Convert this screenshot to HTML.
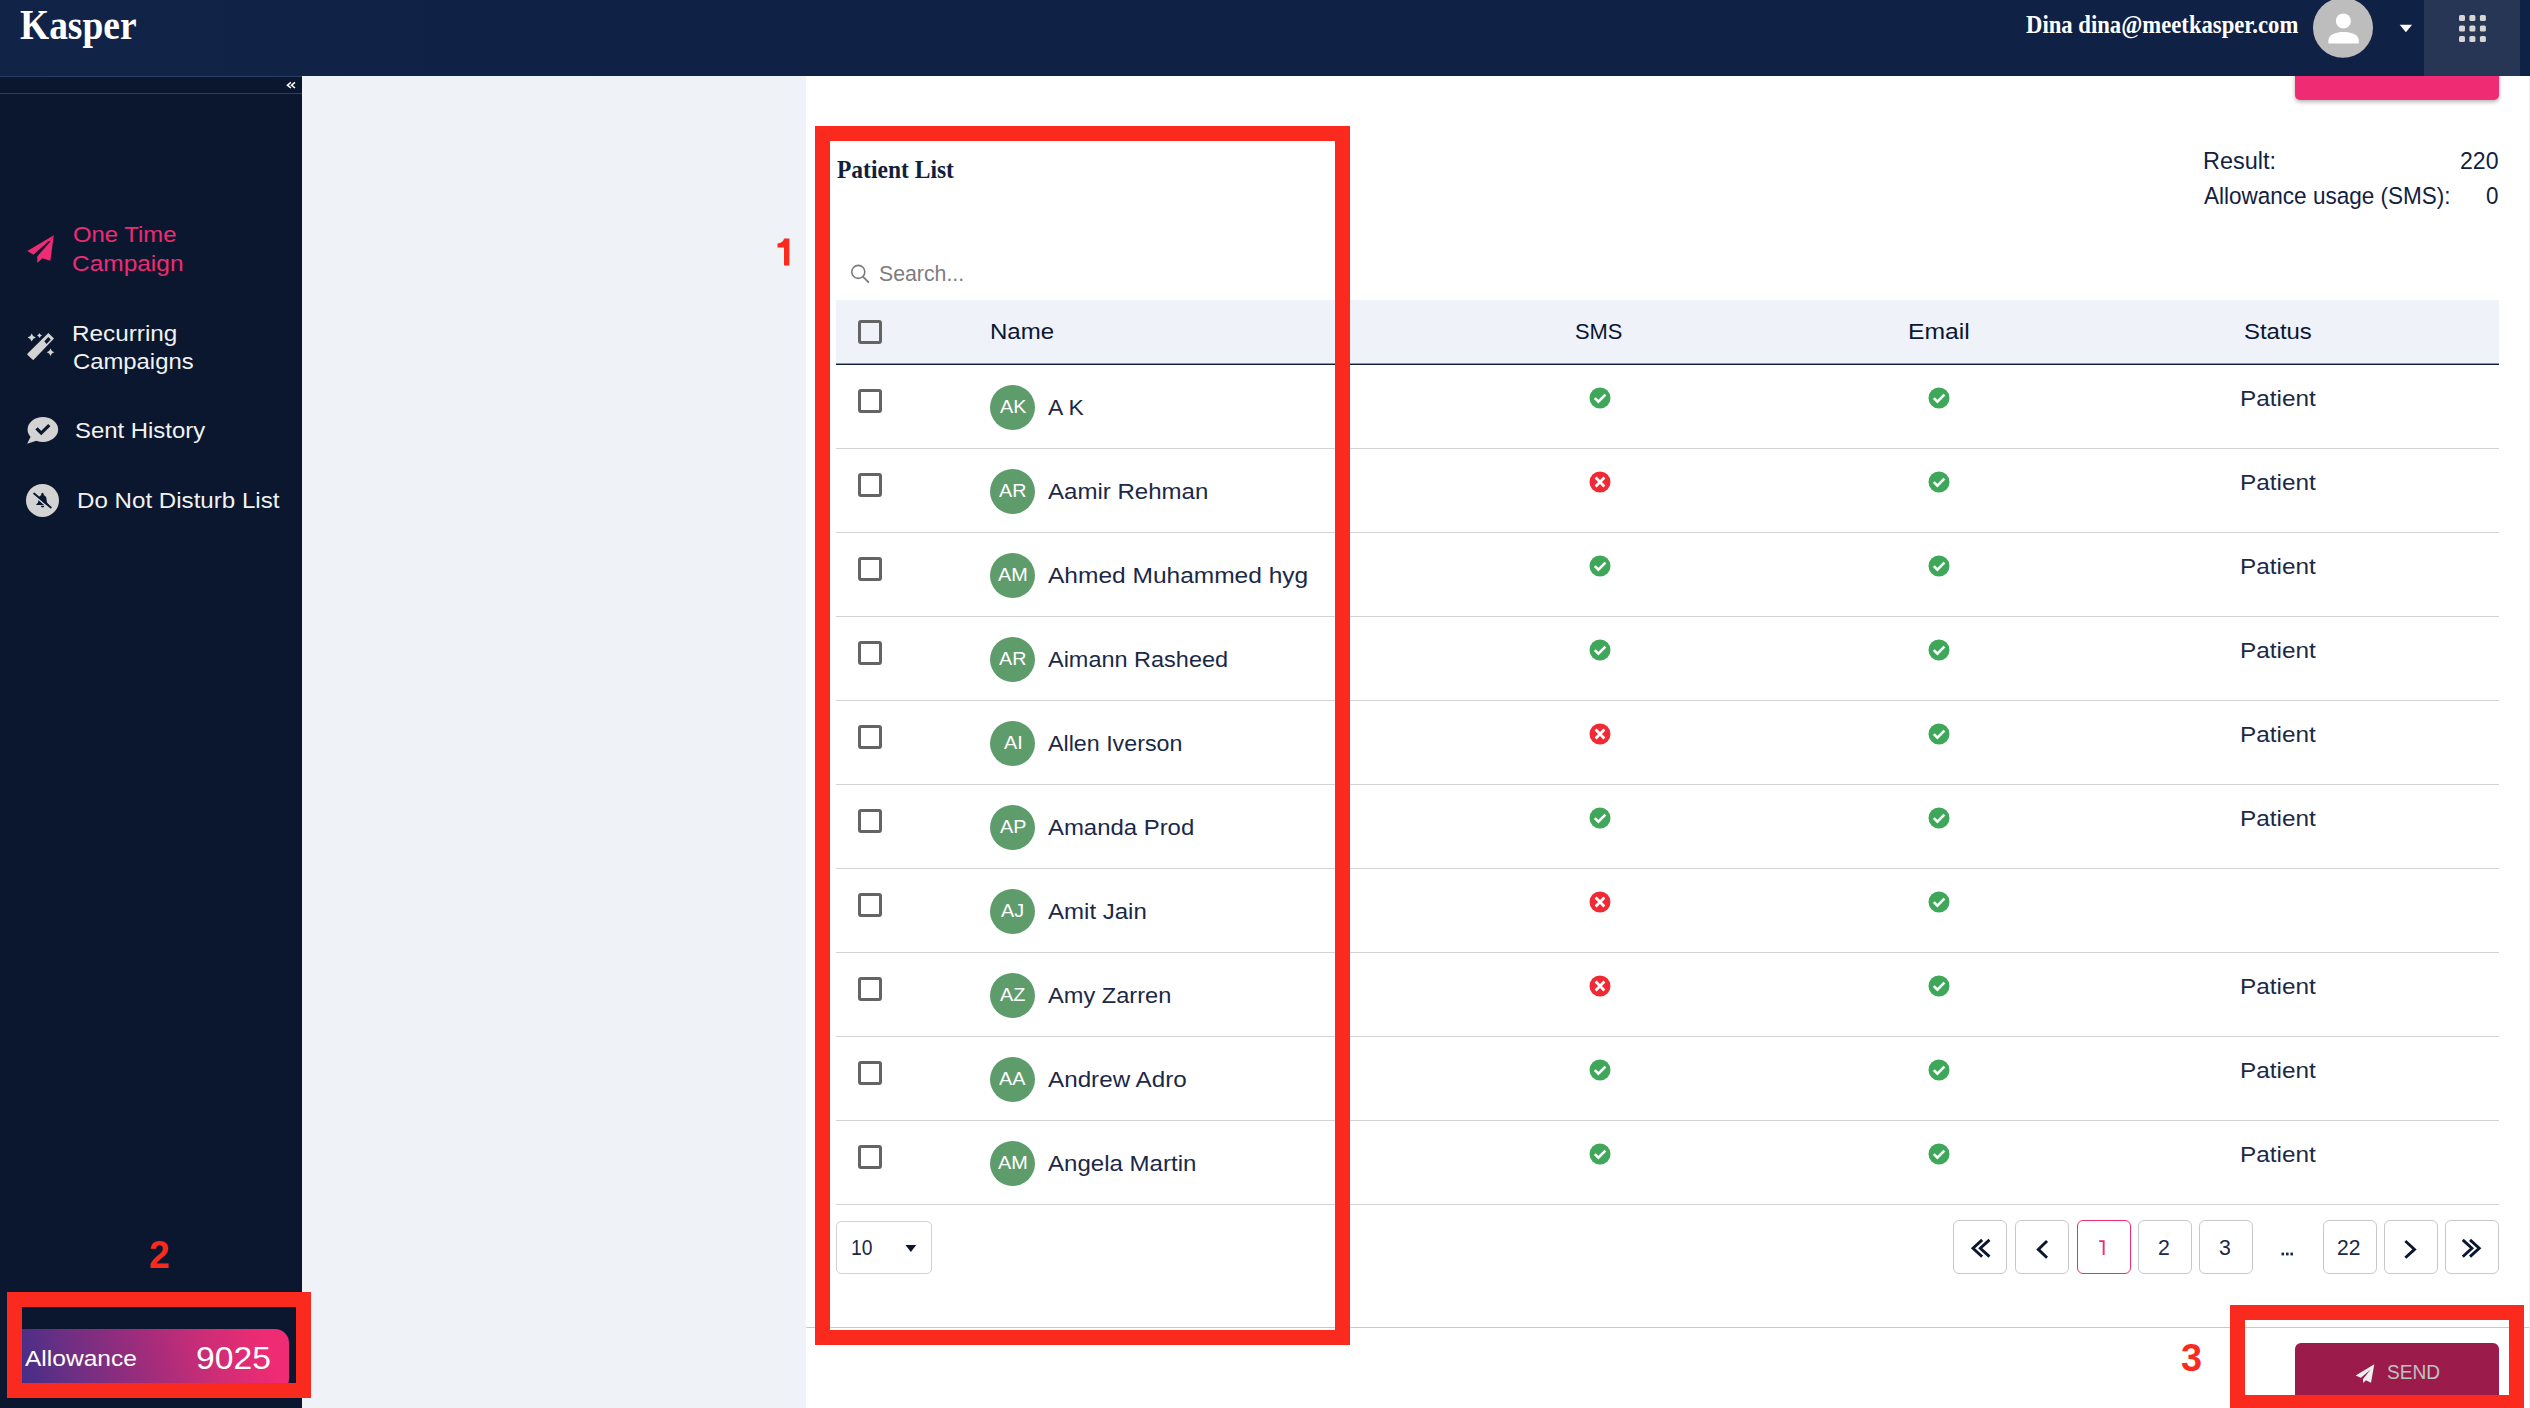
<!DOCTYPE html>
<html><head><meta charset="utf-8"><style>
html,body{margin:0;padding:0;}
body{width:2530px;height:1408px;overflow:hidden;position:relative;background:#fff;}
.abs{position:absolute;}
.t{position:absolute;white-space:nowrap;transform-origin:0 0;}
.cb{position:absolute;width:18px;height:18px;border:3px solid #646464;border-radius:3px;box-sizing:content-box;}
.av{position:absolute;width:45px;height:45px;border-radius:50%;background:#5f9c6c;}
.ini{font-family:"Liberation Sans",sans-serif;font-size:17px;color:#fff;}
.pg{position:absolute;top:1220px;width:54px;height:54px;box-sizing:border-box;border:1px solid #c9c9c9;border-radius:6px;}
</style></head><body>
<!-- sidebar -->
<div class="abs" style="left:0;top:76px;width:302px;height:1332px;background:#0a172f"></div>
<div class="abs" style="left:0;top:76px;width:302px;height:1px;background:#2a3d63"></div>
<div class="abs" style="left:0;top:93px;width:302px;height:1px;background:#2a3d63"></div>
<svg class="abs" style="left:284px;top:79px" width="14" height="12" viewBox="0 0 14 12">
  <path d="M6.9 3.4 L3.4 6.2 L6.9 9 M11 3.4 L7.5 6.2 L11 9" stroke="#fff" stroke-width="1.5" fill="none"/>
</svg>
<svg class="abs" style="left:20px;top:225px" width="45" height="45" viewBox="0 0 45 45">
  <path d="M33.8 10.2 L7.3 26 L13.4 29.8 L28.9 16.1 L30.4 16.6 Z" fill="#ef2b73"/>
  <path d="M33.8 10.2 L30.4 35.8 L22.4 33.2 L17.4 37.9 L17.2 31.4 L30 16.9 Z" fill="#ef2b73"/>
</svg>
<svg class="abs" style="left:20px;top:325px" width="45" height="45" viewBox="0 0 45 45">
  <path d="M28.4 8 L34 13.4 L13.9 34.6 Q13.3 35.2 12.5 34.6 L7.6 29.9 Q7 29.2 7.6 28.6 Z M28.3 12 L24.3 16.3 L26.5 18.9 L30.8 14.5 Z" fill="#d3d3d3" fill-rule="evenodd"/>
  <path d="M11.7 8.4 Q12.601999999999999 11.598 15.799999999999999 12.5 Q12.601999999999999 13.402 11.7 16.6 Q10.798 13.402 7.6 12.5 Q10.798 11.598 11.7 8.4Z" fill="#d3d3d3"/>
  <path d="M19.5 8.0 Q20.05 9.95 22.0 10.5 Q20.05 11.05 19.5 13.0 Q18.95 11.05 17.0 10.5 Q18.95 9.95 19.5 8.0Z" fill="#d3d3d3"/>
  <path d="M30.5 23.5 Q31.336 26.464000000000002 34.3 27.3 Q31.336 28.136 30.5 31.1 Q29.664 28.136 26.7 27.3 Q29.664 26.464000000000002 30.5 23.5Z" fill="#d3d3d3"/>
</svg>
<svg class="abs" style="left:20px;top:410px" width="45" height="45" viewBox="0 0 45 45">
  <ellipse cx="22.85" cy="19.5" rx="15.3" ry="12.5" fill="#d3d3d3"/>
  <path d="M7.2 33.7 L10.7 26.5 L17 30.5 Z" fill="#d3d3d3"/>
  <path d="M16.5 18.4 L21.2 23.1 L29.3 15.1" stroke="#0a172f" stroke-width="3.2" fill="none"/>
</svg>
<svg class="abs" style="left:20px;top:478px" width="45" height="45" viewBox="0 0 45 45">
  <circle cx="22.5" cy="22.4" r="16.5" fill="#d3d3d3"/>
  <ellipse cx="22.5" cy="16.3" rx="1.2" ry="1.5" fill="#0b1630"/>
  <path d="M15.9 26.9 C17.6 25.6 18.5 24.2 18.5 21.6 C18.5 18.6 20.2 17 22.5 17 C24.8 17 26.6 18.6 26.6 21.6 C26.6 24.2 27.4 25.6 29.1 26.9 Z" fill="#0b1630"/>
  <path d="M20.8 27.7 A1.75 1.75 0 0 0 24.3 27.7 Z" fill="#0b1630"/>
  <path d="M13.2 16.6 L29.6 30.6" stroke="#d3d3d3" stroke-width="1.7"/>
  <path d="M14.1 15.6 L30.8 29.4" stroke="#0b1630" stroke-width="1.9" stroke-linecap="round"/>
</svg>
<!-- allowance -->
<div class="abs" style="left:10px;top:1329px;width:279px;height:64px;border-radius:0 14px 14px 0;background:linear-gradient(75deg,#3b2d88 0%,#6a2f84 22%,#9c2c7c 47%,#cf2d76 72%,#ef2b73 92%)"></div>
<!-- gray panel -->
<div class="abs" style="left:302px;top:76px;width:504px;height:1332px;background:#eff2f7"></div>
<!-- top pink button -->
<div class="abs" style="left:2295px;top:50px;width:204px;height:50px;background:#ef2b73;border-radius:5px;box-shadow:0 2px 4px rgba(0,0,0,0.3)"></div>
<!-- header -->
<div class="abs" style="left:0;top:0;width:2530px;height:76px;background:linear-gradient(90deg,#112448 0%,#0f2144 25%,#0f2144 100%)"></div>
<div class="abs" style="left:2424px;top:0;width:96px;height:76px;background:#273654"></div>
<svg class="abs" style="left:2300px;top:0" width="130" height="76" viewBox="0 0 130 76">
  <circle cx="43" cy="27.8" r="30" fill="#bdbdbd"/>
  <circle cx="43.4" cy="20.9" r="7.5" fill="#fff"/>
  <path d="M28.4 43.6 L28.4 40.5 C28.4 34.5 36 31.9 43.6 31.9 C51.2 31.9 58.8 34.5 58.8 40.5 L58.8 43.6 Z" fill="#fff"/>
  <path d="M99.7 24.8 L112.1 24.8 L105.9 32.3 Z" fill="#fff"/>
</svg>
<svg class="abs" style="left:2459px;top:15px" width="28" height="28" viewBox="0 0 28 28">
  <g fill="#d6d6d6">
  <rect x="0" y="0" width="6" height="6" rx="1.5"/><rect x="10.4" y="0" width="6" height="6" rx="1.5"/><rect x="20.9" y="0" width="6" height="6" rx="1.5"/>
  <rect x="0" y="10.5" width="6" height="6" rx="1.5"/><rect x="10.4" y="10.5" width="6" height="6" rx="1.5"/><rect x="20.9" y="10.5" width="6" height="6" rx="1.5"/>
  <rect x="0" y="21" width="6" height="6" rx="1.5"/><rect x="10.4" y="21" width="6" height="6" rx="1.5"/><rect x="20.9" y="21" width="6" height="6" rx="1.5"/>
  </g>
</svg>
<!-- search icon -->
<svg class="abs" style="left:848px;top:263px" width="24" height="24" viewBox="0 0 24 24">
  <circle cx="10.3" cy="8.9" r="6.5" stroke="#7a7a7a" stroke-width="1.6" fill="none"/>
  <path d="M14.9 13.6 L20.4 19.1" stroke="#7a7a7a" stroke-width="1.8" stroke-linecap="round"/>
</svg>
<!-- table header -->
<div class="abs" style="left:836px;top:300px;width:1663px;height:64px;background:#eff2f8"></div>
<div class="abs" style="left:836px;top:363px;width:1663px;height:1px;background:#8a93a6"></div><div class="abs" style="left:836px;top:364px;width:1663px;height:1px;background:#0f1f3d"></div>
<div class="cb" style="left:858px;top:320px"></div>
<div class='abs' style='left:836px;top:448px;width:1663px;height:1px;background:#d3d3d3'></div>
<div class='cb' style='left:858px;top:389px'></div>
<div class='av' style='left:990px;top:385px'></div>
<svg class='abs' style='left:1588.5px;top:387.4px' width='22' height='22' viewBox='0 0 22 22'><circle cx='11' cy='11' r='10.5' fill='#3fa75a'/><path d='M5.8 11.1 L9.4 14.7 L16.4 7.7' stroke='#fff' stroke-width='2.6' fill='none'/></svg>
<svg class='abs' style='left:1928px;top:387.4px' width='22' height='22' viewBox='0 0 22 22'><circle cx='11' cy='11' r='10.5' fill='#3fa75a'/><path d='M5.8 11.1 L9.4 14.7 L16.4 7.7' stroke='#fff' stroke-width='2.6' fill='none'/></svg>
<div class='abs' style='left:836px;top:532px;width:1663px;height:1px;background:#d3d3d3'></div>
<div class='cb' style='left:858px;top:473px'></div>
<div class='av' style='left:990px;top:469px'></div>
<svg class='abs' style='left:1588.5px;top:471.4px' width='22' height='22' viewBox='0 0 22 22'><circle cx='11' cy='11' r='10.5' fill='#ef2a34'/><path d='M6.6 6.6 L15.4 15.4 M15.4 6.6 L6.6 15.4' stroke='#fff' stroke-width='2.8' fill='none'/></svg>
<svg class='abs' style='left:1928px;top:471.4px' width='22' height='22' viewBox='0 0 22 22'><circle cx='11' cy='11' r='10.5' fill='#3fa75a'/><path d='M5.8 11.1 L9.4 14.7 L16.4 7.7' stroke='#fff' stroke-width='2.6' fill='none'/></svg>
<div class='abs' style='left:836px;top:616px;width:1663px;height:1px;background:#d3d3d3'></div>
<div class='cb' style='left:858px;top:557px'></div>
<div class='av' style='left:990px;top:553px'></div>
<svg class='abs' style='left:1588.5px;top:555.4px' width='22' height='22' viewBox='0 0 22 22'><circle cx='11' cy='11' r='10.5' fill='#3fa75a'/><path d='M5.8 11.1 L9.4 14.7 L16.4 7.7' stroke='#fff' stroke-width='2.6' fill='none'/></svg>
<svg class='abs' style='left:1928px;top:555.4px' width='22' height='22' viewBox='0 0 22 22'><circle cx='11' cy='11' r='10.5' fill='#3fa75a'/><path d='M5.8 11.1 L9.4 14.7 L16.4 7.7' stroke='#fff' stroke-width='2.6' fill='none'/></svg>
<div class='abs' style='left:836px;top:700px;width:1663px;height:1px;background:#d3d3d3'></div>
<div class='cb' style='left:858px;top:641px'></div>
<div class='av' style='left:990px;top:637px'></div>
<svg class='abs' style='left:1588.5px;top:639.4px' width='22' height='22' viewBox='0 0 22 22'><circle cx='11' cy='11' r='10.5' fill='#3fa75a'/><path d='M5.8 11.1 L9.4 14.7 L16.4 7.7' stroke='#fff' stroke-width='2.6' fill='none'/></svg>
<svg class='abs' style='left:1928px;top:639.4px' width='22' height='22' viewBox='0 0 22 22'><circle cx='11' cy='11' r='10.5' fill='#3fa75a'/><path d='M5.8 11.1 L9.4 14.7 L16.4 7.7' stroke='#fff' stroke-width='2.6' fill='none'/></svg>
<div class='abs' style='left:836px;top:784px;width:1663px;height:1px;background:#d3d3d3'></div>
<div class='cb' style='left:858px;top:725px'></div>
<div class='av' style='left:990px;top:721px'></div>
<svg class='abs' style='left:1588.5px;top:723.4px' width='22' height='22' viewBox='0 0 22 22'><circle cx='11' cy='11' r='10.5' fill='#ef2a34'/><path d='M6.6 6.6 L15.4 15.4 M15.4 6.6 L6.6 15.4' stroke='#fff' stroke-width='2.8' fill='none'/></svg>
<svg class='abs' style='left:1928px;top:723.4px' width='22' height='22' viewBox='0 0 22 22'><circle cx='11' cy='11' r='10.5' fill='#3fa75a'/><path d='M5.8 11.1 L9.4 14.7 L16.4 7.7' stroke='#fff' stroke-width='2.6' fill='none'/></svg>
<div class='abs' style='left:836px;top:868px;width:1663px;height:1px;background:#d3d3d3'></div>
<div class='cb' style='left:858px;top:809px'></div>
<div class='av' style='left:990px;top:805px'></div>
<svg class='abs' style='left:1588.5px;top:807.4px' width='22' height='22' viewBox='0 0 22 22'><circle cx='11' cy='11' r='10.5' fill='#3fa75a'/><path d='M5.8 11.1 L9.4 14.7 L16.4 7.7' stroke='#fff' stroke-width='2.6' fill='none'/></svg>
<svg class='abs' style='left:1928px;top:807.4px' width='22' height='22' viewBox='0 0 22 22'><circle cx='11' cy='11' r='10.5' fill='#3fa75a'/><path d='M5.8 11.1 L9.4 14.7 L16.4 7.7' stroke='#fff' stroke-width='2.6' fill='none'/></svg>
<div class='abs' style='left:836px;top:952px;width:1663px;height:1px;background:#d3d3d3'></div>
<div class='cb' style='left:858px;top:893px'></div>
<div class='av' style='left:990px;top:889px'></div>
<svg class='abs' style='left:1588.5px;top:891.4px' width='22' height='22' viewBox='0 0 22 22'><circle cx='11' cy='11' r='10.5' fill='#ef2a34'/><path d='M6.6 6.6 L15.4 15.4 M15.4 6.6 L6.6 15.4' stroke='#fff' stroke-width='2.8' fill='none'/></svg>
<svg class='abs' style='left:1928px;top:891.4px' width='22' height='22' viewBox='0 0 22 22'><circle cx='11' cy='11' r='10.5' fill='#3fa75a'/><path d='M5.8 11.1 L9.4 14.7 L16.4 7.7' stroke='#fff' stroke-width='2.6' fill='none'/></svg>
<div class='abs' style='left:836px;top:1036px;width:1663px;height:1px;background:#d3d3d3'></div>
<div class='cb' style='left:858px;top:977px'></div>
<div class='av' style='left:990px;top:973px'></div>
<svg class='abs' style='left:1588.5px;top:975.4px' width='22' height='22' viewBox='0 0 22 22'><circle cx='11' cy='11' r='10.5' fill='#ef2a34'/><path d='M6.6 6.6 L15.4 15.4 M15.4 6.6 L6.6 15.4' stroke='#fff' stroke-width='2.8' fill='none'/></svg>
<svg class='abs' style='left:1928px;top:975.4px' width='22' height='22' viewBox='0 0 22 22'><circle cx='11' cy='11' r='10.5' fill='#3fa75a'/><path d='M5.8 11.1 L9.4 14.7 L16.4 7.7' stroke='#fff' stroke-width='2.6' fill='none'/></svg>
<div class='abs' style='left:836px;top:1120px;width:1663px;height:1px;background:#d3d3d3'></div>
<div class='cb' style='left:858px;top:1061px'></div>
<div class='av' style='left:990px;top:1057px'></div>
<svg class='abs' style='left:1588.5px;top:1059.4px' width='22' height='22' viewBox='0 0 22 22'><circle cx='11' cy='11' r='10.5' fill='#3fa75a'/><path d='M5.8 11.1 L9.4 14.7 L16.4 7.7' stroke='#fff' stroke-width='2.6' fill='none'/></svg>
<svg class='abs' style='left:1928px;top:1059.4px' width='22' height='22' viewBox='0 0 22 22'><circle cx='11' cy='11' r='10.5' fill='#3fa75a'/><path d='M5.8 11.1 L9.4 14.7 L16.4 7.7' stroke='#fff' stroke-width='2.6' fill='none'/></svg>
<div class='abs' style='left:836px;top:1204px;width:1663px;height:1px;background:#d3d3d3'></div>
<div class='cb' style='left:858px;top:1145px'></div>
<div class='av' style='left:990px;top:1141px'></div>
<svg class='abs' style='left:1588.5px;top:1143.4px' width='22' height='22' viewBox='0 0 22 22'><circle cx='11' cy='11' r='10.5' fill='#3fa75a'/><path d='M5.8 11.1 L9.4 14.7 L16.4 7.7' stroke='#fff' stroke-width='2.6' fill='none'/></svg>
<svg class='abs' style='left:1928px;top:1143.4px' width='22' height='22' viewBox='0 0 22 22'><circle cx='11' cy='11' r='10.5' fill='#3fa75a'/><path d='M5.8 11.1 L9.4 14.7 L16.4 7.7' stroke='#fff' stroke-width='2.6' fill='none'/></svg>
<!-- pagination -->
<div class='pg' style='left:1953.3px;border-color:#c9c9c9'></div>
<div class='pg' style='left:2015.4px;border-color:#c9c9c9'></div>
<div class='pg' style='left:2076.6px;border-color:#ef2b73'></div>
<div class='pg' style='left:2138.3px;border-color:#c9c9c9'></div>
<div class='pg' style='left:2199.3px;border-color:#c9c9c9'></div>
<div class='pg' style='left:2322.5px;border-color:#c9c9c9'></div>
<div class='pg' style='left:2384.3px;border-color:#c9c9c9'></div>
<div class='pg' style='left:2445.3px;border-color:#c9c9c9'></div>
<svg class="abs" style="left:1953px;top:1220px" width="550" height="54" viewBox="1953 1220 550 54">
  <g stroke="#0b1630" stroke-width="2.9" fill="none" stroke-linecap="square">
  <path d="M1981.1 1240.9 L1973 1248.3 L1981.1 1255.7 M1988.4 1240.9 L1980.3 1248.3 L1988.4 1255.7"/>
  <path d="M2046 1242 L2038.3 1249.4 L2046 1256.8"/>
  <path d="M2406.4 1242 L2414.5 1249.4 L2406.4 1256.8"/>
  <path d="M2463.8 1240.9 L2471.9 1248.3 L2463.8 1255.7 M2471.1 1240.9 L2479.2 1248.3 L2471.1 1255.7"/>
  </g>
  <g fill="#1b2947"><rect x="2281.5" y="1252.6" width="2.6" height="2.8"/><rect x="2286" y="1252.6" width="2.6" height="2.8"/><rect x="2290.4" y="1252.6" width="2.6" height="2.8"/></g>
</svg>
<svg class="abs" style="left:2095px;top:1236px" width="14" height="22" viewBox="2095 1236 14 22"><path d="M2099.2 1240.2 H2104.6 V1254.9 H2102.7 V1242 H2099.2 Z" fill="#ef2b73"/></svg>
<!-- dropdown -->
<div class="abs" style="left:836.3px;top:1220.5px;width:93.5px;height:51px;border:1.2px solid #d2d2d2;border-radius:5px"></div>
<svg class="abs" style="left:900px;top:1240px" width="20" height="16" viewBox="0 0 20 16"><path d="M5.5 5 L16.2 5 L10.85 12 Z" fill="#0b1630"/></svg>
<!-- footer line -->
<div class="abs" style="left:806px;top:1327px;width:1724px;height:1px;background:#c3cad6"></div>
<div class="abs" style="left:2529px;top:76px;width:1px;height:1332px;background:#eef1f6"></div>
<!-- send button -->
<div class="abs" style="left:2295px;top:1343px;width:204px;height:70px;background:#9b1c4a;border-radius:6px"></div>
<svg class="abs" style="left:2352px;top:1361px" width="26" height="26" viewBox="0 0 26 26">
  <path d="M22.3 3.3 L3.7 14.5 L8.8 16.7 L18.5 8.7 L11 18 L11.2 22 L13.9 19.2 L19 21.8 Z" fill="#f0f0f0"/>
</svg>
<div class='t' style='left:20.00px;top:5.00px;font-family:"Liberation Serif";font-size:41.67px;line-height:41.67px;font-weight:700;color:#ffffff;transform:scaleX(0.8992);'>Kasper</div>
<div class='t' style='left:2026.00px;top:12.60px;font-family:"Liberation Serif";font-size:24.7px;line-height:24.7px;font-weight:700;color:#ffffff;transform:scaleX(0.9189);'>Dina dina@meetkasper.com</div>
<div class='t' style='left:73.40px;top:224.40px;font-family:"Liberation Sans";font-size:22.0px;line-height:22.0px;font-weight:400;color:#ef2b73;transform:scaleX(1.0842);'>One Time</div>
<div class='t' style='left:72.33px;top:252.00px;font-family:"Liberation Sans";font-size:22.86px;line-height:22.86px;font-weight:400;color:#ef2b73;transform:scaleX(1.0699);'>Campaign</div>
<div class='t' style='left:71.90px;top:322.60px;font-family:"Liberation Sans";font-size:22.0px;line-height:22.0px;font-weight:400;color:#f2f2f2;transform:scaleX(1.1043);'>Recurring</div>
<div class='t' style='left:73.00px;top:352.00px;font-family:"Liberation Sans";font-size:21.43px;line-height:21.43px;font-weight:400;color:#f2f2f2;transform:scaleX(1.1130);'>Campaigns</div>
<div class='t' style='left:75.11px;top:420.40px;font-family:"Liberation Sans";font-size:22.0px;line-height:22.0px;font-weight:400;color:#f2f2f2;transform:scaleX(1.0857);'>Sent History</div>
<div class='t' style='left:76.90px;top:490.30px;font-family:"Liberation Sans";font-size:21.86px;line-height:21.86px;font-weight:400;color:#f2f2f2;transform:scaleX(1.1038);'>Do Not Disturb List</div>
<div class='t' style='left:24.90px;top:1349.00px;font-family:"Liberation Sans";font-size:21.43px;line-height:21.43px;font-weight:400;color:#ffffff;transform:scaleX(1.1454);'>Allowance</div>
<div class='t' style='left:195.61px;top:1344.30px;font-family:"Liberation Sans";font-size:30.86px;line-height:30.86px;font-weight:400;color:#ffffff;transform:scaleX(1.0910);'>9025</div>
<div class='t' style='left:836.70px;top:157.00px;font-family:"Liberation Serif";font-size:25.15px;line-height:25.15px;font-weight:700;color:#0f1f3d;transform:scaleX(0.9352);'>Patient List</div>
<div class='t' style='left:879.00px;top:263.90px;font-family:"Liberation Sans";font-size:21.29px;line-height:21.29px;font-weight:400;color:#7d7d7d;transform:scaleX(1.0000);'>Search...</div>
<div class='t' style='left:2203.28px;top:149.50px;font-family:"Liberation Sans";font-size:23.0px;line-height:23.0px;font-weight:400;color:#13213f;transform:scaleX(1.0188);'>Result:</div>
<div class='t' style='left:2460.20px;top:149.50px;font-family:"Liberation Sans";font-size:23.0px;line-height:23.0px;font-weight:400;color:#13213f;transform:scaleX(1.0027);'>220</div>
<div class='t' style='left:2204.00px;top:185.30px;font-family:"Liberation Sans";font-size:23.29px;line-height:23.29px;font-weight:400;color:#13213f;transform:scaleX(0.9673);'>Allowance usage (SMS):</div>
<div class='t' style='left:2485.50px;top:185.30px;font-family:"Liberation Sans";font-size:23.29px;line-height:23.29px;font-weight:400;color:#13213f;transform:scaleX(0.9615);'>0</div>
<div class='t' style='left:989.88px;top:322.00px;font-family:"Liberation Sans";font-size:21.43px;line-height:21.43px;font-weight:400;color:#0b1733;transform:scaleX(1.1214);'>Name</div>
<div class='t' style='left:1574.98px;top:322.00px;font-family:"Liberation Sans";font-size:21.43px;line-height:21.43px;font-weight:400;color:#0b1733;transform:scaleX(1.0222);'>SMS</div>
<div class='t' style='left:1907.85px;top:322.00px;font-family:"Liberation Sans";font-size:21.43px;line-height:21.43px;font-weight:400;color:#0b1733;transform:scaleX(1.1538);'>Email</div>
<div class='t' style='left:2243.88px;top:322.00px;font-family:"Liberation Sans";font-size:21.43px;line-height:21.43px;font-weight:400;color:#0b1733;transform:scaleX(1.1167);'>Status</div>
<div class='t' style='left:1048.30px;top:398.00px;font-family:"Liberation Sans";font-size:21.43px;line-height:21.43px;font-weight:400;color:#1b2947;transform:scaleX(1.0697);'>A K</div>
<div class='t' style='left:2239.89px;top:387.50px;font-family:"Liberation Sans";font-size:21.86px;line-height:21.86px;font-weight:400;color:#1b2947;transform:scaleX(1.1147);'>Patient</div>
<div class='t' style='left:1048.30px;top:482.00px;font-family:"Liberation Sans";font-size:21.43px;line-height:21.43px;font-weight:400;color:#1b2947;transform:scaleX(1.1225);'>Aamir Rehman</div>
<div class='t' style='left:2239.89px;top:471.50px;font-family:"Liberation Sans";font-size:21.86px;line-height:21.86px;font-weight:400;color:#1b2947;transform:scaleX(1.1147);'>Patient</div>
<div class='t' style='left:1048.30px;top:566.00px;font-family:"Liberation Sans";font-size:21.43px;line-height:21.43px;font-weight:400;color:#1b2947;transform:scaleX(1.1441);'>Ahmed Muhammed hyg</div>
<div class='t' style='left:2239.89px;top:555.50px;font-family:"Liberation Sans";font-size:21.86px;line-height:21.86px;font-weight:400;color:#1b2947;transform:scaleX(1.1147);'>Patient</div>
<div class='t' style='left:1048.30px;top:650.00px;font-family:"Liberation Sans";font-size:21.43px;line-height:21.43px;font-weight:400;color:#1b2947;transform:scaleX(1.0957);'>Aimann Rasheed</div>
<div class='t' style='left:2239.89px;top:639.50px;font-family:"Liberation Sans";font-size:21.86px;line-height:21.86px;font-weight:400;color:#1b2947;transform:scaleX(1.1147);'>Patient</div>
<div class='t' style='left:1048.30px;top:734.00px;font-family:"Liberation Sans";font-size:21.43px;line-height:21.43px;font-weight:400;color:#1b2947;transform:scaleX(1.0854);'>Allen Iverson</div>
<div class='t' style='left:2239.89px;top:723.50px;font-family:"Liberation Sans";font-size:21.86px;line-height:21.86px;font-weight:400;color:#1b2947;transform:scaleX(1.1147);'>Patient</div>
<div class='t' style='left:1048.30px;top:818.00px;font-family:"Liberation Sans";font-size:21.43px;line-height:21.43px;font-weight:400;color:#1b2947;transform:scaleX(1.1162);'>Amanda Prod</div>
<div class='t' style='left:2239.89px;top:807.50px;font-family:"Liberation Sans";font-size:21.86px;line-height:21.86px;font-weight:400;color:#1b2947;transform:scaleX(1.1147);'>Patient</div>
<div class='t' style='left:1048.30px;top:902.00px;font-family:"Liberation Sans";font-size:21.43px;line-height:21.43px;font-weight:400;color:#1b2947;transform:scaleX(1.1216);'>Amit Jain</div>
<div class='t' style='left:1048.30px;top:986.00px;font-family:"Liberation Sans";font-size:21.43px;line-height:21.43px;font-weight:400;color:#1b2947;transform:scaleX(1.1018);'>Amy Zarren</div>
<div class='t' style='left:2239.89px;top:975.50px;font-family:"Liberation Sans";font-size:21.86px;line-height:21.86px;font-weight:400;color:#1b2947;transform:scaleX(1.1147);'>Patient</div>
<div class='t' style='left:1048.30px;top:1070.00px;font-family:"Liberation Sans";font-size:21.43px;line-height:21.43px;font-weight:400;color:#1b2947;transform:scaleX(1.1311);'>Andrew Adro</div>
<div class='t' style='left:2239.89px;top:1059.50px;font-family:"Liberation Sans";font-size:21.86px;line-height:21.86px;font-weight:400;color:#1b2947;transform:scaleX(1.1147);'>Patient</div>
<div class='t' style='left:1048.30px;top:1154.00px;font-family:"Liberation Sans";font-size:21.43px;line-height:21.43px;font-weight:400;color:#1b2947;transform:scaleX(1.1227);'>Angela Martin</div>
<div class='t' style='left:2239.89px;top:1143.50px;font-family:"Liberation Sans";font-size:21.86px;line-height:21.86px;font-weight:400;color:#1b2947;transform:scaleX(1.1147);'>Patient</div>
<div class='t' style='left:999.62px;top:399.00px;font-family:"Liberation Sans";font-size:17.71px;line-height:17.71px;font-weight:400;color:#ffffff;transform:scaleX(1.1200);'>AK</div>
<div class='t' style='left:999.06px;top:483.00px;font-family:"Liberation Sans";font-size:17.71px;line-height:17.71px;font-weight:400;color:#ffffff;transform:scaleX(1.1200);'>AR</div>
<div class='t' style='left:997.94px;top:567.00px;font-family:"Liberation Sans";font-size:17.71px;line-height:17.71px;font-weight:400;color:#ffffff;transform:scaleX(1.1200);'>AM</div>
<div class='t' style='left:999.06px;top:651.00px;font-family:"Liberation Sans";font-size:17.71px;line-height:17.71px;font-weight:400;color:#ffffff;transform:scaleX(1.1200);'>AR</div>
<div class='t' style='left:1003.54px;top:735.00px;font-family:"Liberation Sans";font-size:17.71px;line-height:17.71px;font-weight:400;color:#ffffff;transform:scaleX(1.1200);'>AI</div>
<div class='t' style='left:999.62px;top:819.00px;font-family:"Liberation Sans";font-size:17.71px;line-height:17.71px;font-weight:400;color:#ffffff;transform:scaleX(1.1200);'>AP</div>
<div class='t' style='left:1001.30px;top:903.00px;font-family:"Liberation Sans";font-size:17.71px;line-height:17.71px;font-weight:400;color:#ffffff;transform:scaleX(1.1200);'>AJ</div>
<div class='t' style='left:999.62px;top:987.00px;font-family:"Liberation Sans";font-size:17.71px;line-height:17.71px;font-weight:400;color:#ffffff;transform:scaleX(1.1200);'>AZ</div>
<div class='t' style='left:999.06px;top:1071.00px;font-family:"Liberation Sans";font-size:17.71px;line-height:17.71px;font-weight:400;color:#ffffff;transform:scaleX(1.1200);'>AA</div>
<div class='t' style='left:997.94px;top:1155.00px;font-family:"Liberation Sans";font-size:17.71px;line-height:17.71px;font-weight:400;color:#ffffff;transform:scaleX(1.1200);'>AM</div>
<div class='t' style='left:2157.82px;top:1237.40px;font-family:"Liberation Sans";font-size:21.71px;line-height:21.71px;font-weight:400;color:#1b2947;transform:scaleX(0.9818);'>2</div>
<div class='t' style='left:2219.12px;top:1237.40px;font-family:"Liberation Sans";font-size:21.71px;line-height:21.71px;font-weight:400;color:#1b2947;transform:scaleX(0.9818);'>3</div>
<div class='t' style='left:2336.73px;top:1237.40px;font-family:"Liberation Sans";font-size:21.71px;line-height:21.71px;font-weight:400;color:#1b2947;transform:scaleX(0.9696);'>22</div>
<div class='t' style='left:851.12px;top:1237.30px;font-family:"Liberation Sans";font-size:21.86px;line-height:21.86px;font-weight:400;color:#1b2947;transform:scaleX(0.8826);'>10</div>
<div class='t' style='left:2386.51px;top:1363.00px;font-family:"Liberation Sans";font-size:19.29px;line-height:19.29px;font-weight:400;color:#bdc3c2;transform:scaleX(0.9904);'>SEND</div>
<div class='t' style='left:149.05px;top:1234.70px;font-family:"Liberation Sans";font-size:39.14px;line-height:39.14px;font-weight:700;color:#fb2a1f;transform:scaleX(0.9500);'>2</div>
<div class='t' style='left:2181.00px;top:1339.50px;font-family:"Liberation Sans";font-size:37.86px;line-height:37.86px;font-weight:700;color:#fb2a1f;transform:scaleX(1.0000);'>3</div>
<svg class="abs" style="left:770px;top:230px" width="30" height="45" viewBox="770 230 30 45"><path d="M784.2 238.5 L789.4 238.5 L789.4 265.6 L784 265.6 L784 247.4 L777.5 247.4 L777.5 243.4 C781 243.4 783.4 241.6 784.2 238.5 Z" fill="#fb2a1f"/></svg>
<!-- red annotation boxes -->
<div class="abs" style="left:815px;top:126px;width:505px;height:1189px;border:15px solid #fb2a1f"></div>
<div class="abs" style="left:7px;top:1291.5px;width:274px;height:76px;border:15px solid #fb2a1f"></div>
<div class="abs" style="left:2230px;top:1305px;width:264px;height:75px;border:15px solid #fb2a1f"></div>
</body></html>
